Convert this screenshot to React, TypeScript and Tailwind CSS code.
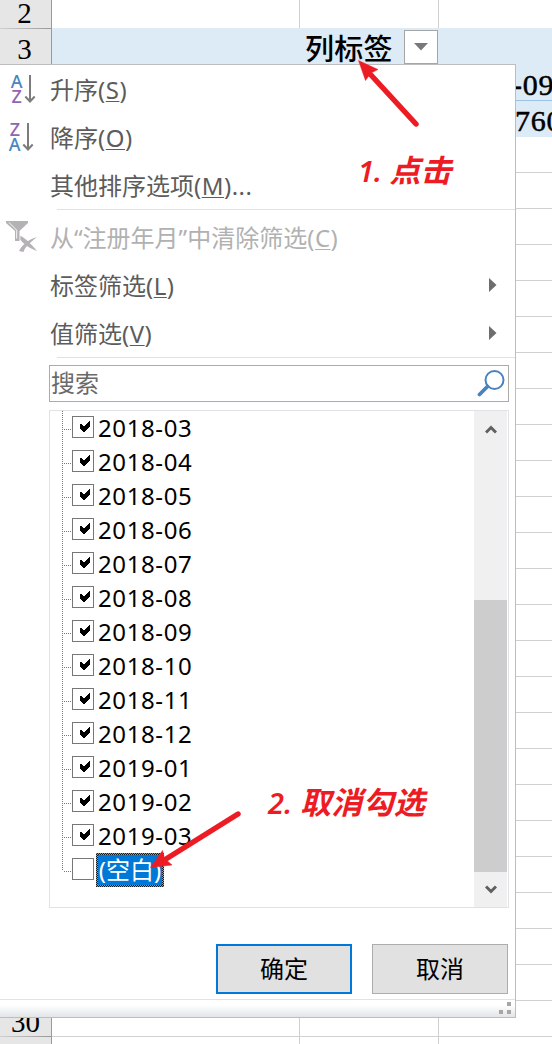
import React from "react";

const months = [
  "2018-03", "2018-04", "2018-05", "2018-06", "2018-07", "2018-08", "2018-09",
  "2018-10", "2018-11", "2018-12", "2019-01", "2019-02", "2019-03",
];

const sheetRows = Array.from({ length: 30 }, (_, i) => i + 2);

function SheetRow({ n }: { n: number }) {
  const label = n === 2 || n === 3 || n === 30 ? String(n) : "";
  const tinted = n >= 3 && n <= 5;
  const line = n === 4 ? "border-[#9bc2e6]" : tinted || n === 2 ? "border-[#ddebf7]" : "border-[#d0d0d0]";
  return (
    <div className="flex h-9 shrink-0">
      <div className="flex w-[52px] shrink-0 flex-col border-r border-[#9b9b9b] bg-[#e6e6e6]">
        <div className={`flex h-[35px] items-center justify-center text-[29px] leading-none ${n === 30 ? "pt-[7px]" : "pr-[2px] pt-[6px]"}`}>{label}</div>
        <div className="h-px bg-linear-to-r from-[#d0d0d0] to-[#999999]" />
      </div>
      <div className={`flex flex-1 border-b ${line} ${tinted ? "bg-[#ddebf7]" : "bg-white"}`}>
        <div className={`w-[248px] border-r ${tinted ? "border-[#ddebf7]" : "border-[#d0d0d0]"}`} />
        <div className={`flex w-[139px] items-start border-r ${tinted ? "border-[#ddebf7]" : "border-[#d0d0d0]"}`}>
          {n === 3 && (
            <>
              <span className="w-[104px] shrink-0 whitespace-nowrap pl-[5px] pt-[7px] text-[29px] font-medium leading-none tracking-[0.3px]">列标签</span>
              <span className="mt-px flex h-[34px] w-[34px] shrink-0 items-center justify-center border border-[#a6a6a6] bg-white">
                <svg width="14" height="8" viewBox="0 0 14 8"><path d="M0 0H14L7 7.5Z" fill="#77787b" /></svg>
              </span>
            </>
          )}
        </div>
        <div className="flex-1 overflow-hidden whitespace-nowrap pt-[5px] text-[30px] leading-[30px] tracking-[0.8px] [-webkit-text-stroke:0.5px_#000]">
          {n === 4 && <span className="ml-[73px]">-09</span>}
          {n === 5 && <span className="ml-[76px]">760</span>}
        </div>
      </div>
    </div>
  );
}

function SortIcon({ reverse = false }: { reverse?: boolean }) {
  return (
    <svg width="30" height="32" viewBox="-1.5 0 30 32" fill="none">
      <g fontFamily="Noto Sans, sans-serif" fontSize="18" fontWeight="500">
        <text x={reverse ? 0.3 : 2.2} y={reverse ? 29.8 : 14.5} fill="#4a86c0">A</text>
        <text x={reverse ? 1.2 : 3} y={reverse ? 14.5 : 29.8} fill="#9264b4">Z</text>
      </g>
      <g stroke="#7c7c7c" strokeWidth="2" transform={reverse ? "translate(-2 0)" : undefined}>
        <path d="M21.5 2V28" />
        <path d="M16.8 23.5L21.5 28.5L26.2 23.5" />
      </g>
    </svg>
  );
}

function ClearIcon() {
  return (
    <svg className="-ml-px" width="32" height="32" viewBox="0 0 32 32">
      <path d="M0 0H22V2L13.5 10V20H9V10L0 2Z" fill="#b4b2b4" />
      <path d="M3 1.5L10.7 9.2V17.5" stroke="white" strokeWidth="0.9" fill="none" />
      <path d="M14.3 15C18 16 25 22.5 31 30C24 27.5 17 23 14.3 18.5ZM31 16C25 21 19 25.5 17.5 31L13 30C15.5 24.5 23 18 31 16Z" fill="#b4b2b4" />
    </svg>
  );
}

function MenuItem({ text, k, after = "", icon, arrow, disabled }: { text: string; k: string; after?: string; icon?: React.ReactNode; arrow?: boolean; disabled?: boolean }) {
  return (
    <div className={`flex h-12 items-center text-[24px] leading-none ${disabled ? "text-[#b1b1b1]" : "text-[#5c5c5c]"}`}>
      <span className="flex w-[51px] shrink-0 pl-[7px]">{icon}</span>
      <span className="-ml-px flex-1 whitespace-nowrap pt-px">
        {text}<span className="tracking-[0.5px]">(<span className="underline decoration-1 underline-offset-2">{k}</span>){after}</span>
      </span>
      {arrow && (
        <svg className="mr-[18px]" width="8" height="14" viewBox="0 0 8 14"><path d="M0 0V14L7.5 7Z" fill="#6d6d6d" /></svg>
      )}
    </div>
  );
}

function TreeRow({ label, blank = false }: { label: string; blank?: boolean }) {
  return (
    <div className="flex h-[34px] shrink-0">
      <div className="flex w-[10px] shrink-0">
        <div className={`w-px bg-[repeating-linear-gradient(to_bottom,#777_0_1px,transparent_1px_2px)] ${blank ? "h-[18px]" : "h-[34px]"}`} />
        <div className="mt-[18px] h-px flex-1 bg-[repeating-linear-gradient(to_right,transparent_0_1px,#777_1px_2px)]" />
      </div>
      <span className="mt-[5px] flex h-[22px] w-[22px] shrink-0 border border-[#777] bg-white">
        {!blank && (
          <svg className="ml-[7px] mt-[4px]" width="11" height="12" viewBox="0 0 11 12" shapeRendering="crispEdges">
            <path d="M0 2.5H1L4 5.5L9.5 0H10V5L4 11.5L0 8Z" fill="#000" />
          </svg>
        )}
      </span>
      {blank ? (
        <span className="ml-[2px] h-[34px] w-[68px] bg-[repeating-conic-gradient(#101820_0_25%,#dd8840_0_50%)] bg-[length:2px_2px] p-[2px]">
          <span className="flex h-[30px] w-[64px] items-center justify-center whitespace-nowrap bg-[#0078d7] text-[24px] leading-none text-white">(空白)</span>
        </span>
      ) : (
        <span className="ml-1 text-[24px] leading-[34px] tracking-[0.6px] text-black">{label}</span>
      )}
    </div>
  );
}

function DropMenu() {
  return (
    <div className="absolute left-0 top-16 flex h-[954px] w-[516px] flex-col border-b border-r border-t border-[#bdbdbd] bg-white font-['Noto_Sans','Noto_Sans_CJK_SC',sans-serif]">
      <div className="h-36">
        <MenuItem text="升序" k="S" icon={<SortIcon />} />
        <MenuItem text="降序" k="O" icon={<SortIcon reverse />} />
        <MenuItem text="其他排序选项" k="M" after="..." />
      </div>
      <div className="ml-[57px] h-px bg-[#e1e1e1]" />
      <div className="h-[147px] pt-[3px]">
        <MenuItem text="从“注册年月”中清除筛选" k="C" icon={<ClearIcon />} disabled />
        <MenuItem text="标签筛选" k="L" arrow />
        <MenuItem text="值筛选" k="V" arrow />
      </div>
      <div className="ml-[57px] h-px bg-[#e1e1e1]" />
      <div className="ml-[49px] mt-[7px] flex h-[37px] w-[460px] shrink-0 items-center justify-between border border-[#ababab] pl-px pr-[3px] text-[24px] leading-none text-[#6a6a6a]">
        <span className="mb-[2px]">搜索</span>
        <svg className="-mt-px" width="28" height="29" viewBox="0 0 28 29" fill="none" stroke="#4a82bd">
          <circle cx="17.5" cy="11" r="9" strokeWidth="2" />
          <path d="M10.5 17.5L2.5 25.5" strokeWidth="3.8" strokeLinecap="round" />
        </svg>
      </div>
      <div className="ml-[49px] mt-[8px] flex h-[498px] w-[460px] shrink-0 border border-[#e1e2e5]">
        <div className="flex flex-1 flex-col pl-[12px]">
          {months.map((m) => <TreeRow key={m} label={m} />)}
          <TreeRow label="" blank />
        </div>
        <div className="mr-px flex w-[33px] flex-col items-center bg-[#f0f0f0]">
          <div className="flex h-[189px] w-full justify-center pt-[13px]">
            <svg width="12" height="10" viewBox="0 0 12 10"><path d="M1 8.5L6 3.5L11 8.5" stroke="#606060" strokeWidth="3" fill="none" /></svg>
          </div>
          <div className="h-[272px] w-full bg-[#cdcdcd]" />
          <div className="flex flex-1 justify-center pt-[12px]">
            <svg width="12" height="10" viewBox="0 0 12 10"><path d="M1 2.5L6 7.5L11 2.5" stroke="#606060" strokeWidth="3" fill="none" /></svg>
          </div>
        </div>
      </div>
      <div className="mt-[36px] flex h-[50px] justify-end gap-5 pr-[7px] text-[24px] leading-none text-black">
        <button className="w-[136px] border-2 border-[#0078d7] bg-[#e1e1e1]">确定</button>
        <button className="w-[136px] border border-[#adadad] bg-[#e1e1e1]">取消</button>
      </div>
      <div className="mt-[5px] flex flex-1 items-end justify-end border-t border-[#dce3ea] bg-linear-to-b from-white from-30% to-[#e2e5e8] pb-[3px] pr-[4px]">
        <div className="grid grid-cols-2 gap-1">
          <i />
          <i className="size-1 bg-[#a6a6a6]" />
          <i className="size-1 bg-[#a6a6a6]" />
          <i className="size-1 bg-[#a6a6a6]" />
        </div>
      </div>
    </div>
  );
}

export default function App() {
  return (
    <div className="relative h-[1044px] w-[552px] overflow-hidden bg-white font-['Liberation_Serif','Noto_Sans_CJK_SC',serif] text-black">
      <div className="-mt-[7px] flex flex-col">
        {sheetRows.map((n) => <SheetRow key={n} n={n} />)}
      </div>
      <DropMenu />
      <svg className="absolute left-0 top-0" width="552" height="1044" viewBox="0 0 552 1044">
        <g fill="#ed1c24" stroke="#ed1c24">
          <path d="M416 124L371 75" strokeWidth="5.4" strokeLinecap="round" />
          <path d="M358.5 60.5L378 69.5L371 73L365.5 80.5Z" strokeWidth="0.5" />
          <path d="M238 814L166 859" strokeWidth="5.4" strokeLinecap="round" />
          <path d="M150.5 867.5L162.5 850.5L164.5 858.5L172 865Z" strokeWidth="0.5" />
        </g>
      </svg>
      <div className="absolute left-[358px] top-[153px] whitespace-nowrap font-['Noto_Sans','Noto_Sans_CJK_SC',sans-serif] text-[31px] font-bold italic leading-[34px] text-[#ed1c24]"><span className="text-[29px] font-semibold">1. </span>点击</div>
      <div className="absolute left-[268px] top-[785px] whitespace-nowrap font-['Noto_Sans','Noto_Sans_CJK_SC',sans-serif] text-[31px] font-bold italic leading-[34px] tracking-[0.2px] text-[#ed1c24]"><span className="text-[29px] font-semibold">2. </span>取消勾选</div>
    </div>
  );
}
